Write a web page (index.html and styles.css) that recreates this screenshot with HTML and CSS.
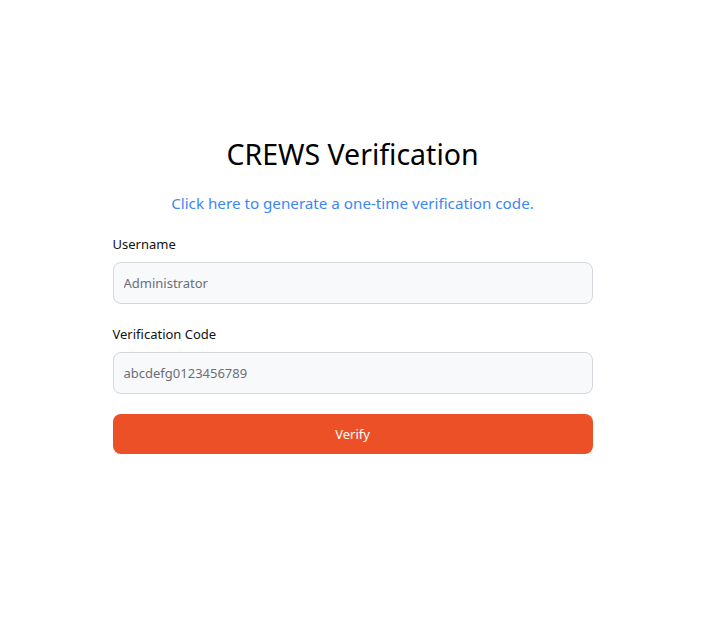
FILE: index.html
```html
<!DOCTYPE html>
<html lang="en">
<head>
<meta charset="utf-8">
<title>CREWS Verification</title>
<link rel="stylesheet" href="styles.css">
</head>
<body>
<main class="page">
  <section class="card">
    <h1 class="title">CREWS Verification</h1>
    <a class="gen-link" href="#">Click here to generate a one-time verification code.</a>
    <form class="form">
      <div class="field">
        <label class="label" for="user">Username</label>
        <input class="input" id="user" type="text" placeholder="Administrator">
      </div>
      <div class="field">
        <label class="label" for="code">Verification Code</label>
        <input class="input" id="code" type="text" placeholder="abcdefg0123456789">
      </div>
      <button class="btn" type="button">Verify</button>
    </form>
  </section>
</main>
</body>
</html>
```
FILE: styles.css
```css
* { box-sizing: border-box; }
html, body { margin: 0; padding: 0; background: #fff; }
body {
  font-family: "Noto Sans", "Open Sans", sans-serif;
  color: #111;
}
.page {
  display: flex;
  justify-content: center;
  padding-top: 132px;
  padding-left: 2px;
}
.card {
  width: 480px;
  display: flex;
  flex-direction: column;
  align-items: stretch;
}
.title {
  margin: 0;
  text-align: center;
  font-size: 28.5px;
  font-weight: 400;
  line-height: 44px;
  color: #000;
}
.gen-link {
  margin-top: 16px;
  text-align: center;
  font-size: 15.2px;
  line-height: 22px;
  color: #3d86f5;
  text-decoration: none;
}
.form {
  margin-top: 20px;
  display: flex;
  flex-direction: column;
}
.field {
  display: flex;
  flex-direction: column;
  margin-bottom: 20px;
}
.label {
  font-size: 13px;
  line-height: 20px;
  color: #111;
  margin-bottom: 8px;
}
.input {
  height: 42px;
  border: 1px solid #d3d6db;
  border-radius: 8px;
  background: #f8f9fb;
  padding: 0 10px;
  font-family: inherit;
  font-size: 13px;
  color: #333;
}
.input::placeholder { color: #6b6f76; }
.btn {
  height: 40px;
  border: 0;
  border-radius: 8px;
  background: #ec5027;
  color: #fff;
  font-family: inherit;
  font-size: 13px;
  cursor: pointer;
}
```
